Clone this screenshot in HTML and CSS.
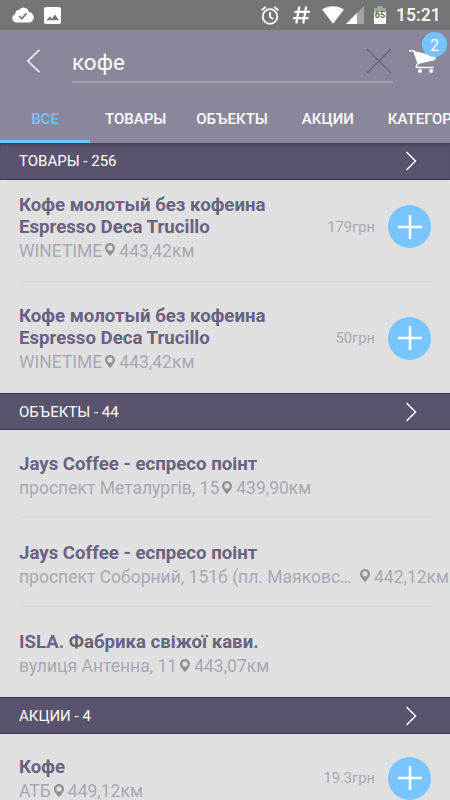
FILE: index.html
```html
<!DOCTYPE html>
<html lang="ru">
<head>
    <meta charset="UTF-8">
    <meta name="viewport" content="width=device-width, initial-scale=1.0">
    <title>Поиск</title>
    <link rel="stylesheet" href="styles.css">
</head>
<body>
    <!-- Shared icons -->
    <svg class="icon-defs" width="0" height="0">
        <symbol id="icon-pin" viewBox="0 0 10 13">
            <path fill-rule="evenodd" d="M5 0C2.2 0 0 2.2 0 4.9 0 8.4 5 13 5 13s5-4.6 5-8.1C10 2.2 7.8 0 5 0zm0 2.3a2.6 2.6 0 1 1 0 5.2 2.6 2.6 0 0 1 0-5.2z"/>
        </symbol>
        <symbol id="icon-plus" viewBox="0 0 24 24">
            <path d="M12 0v24M0 12h24"/>
        </symbol>
        <symbol id="icon-chevron" viewBox="0 0 12 20">
            <path d="M1.500 1l9 9-9 9"/>
        </symbol>
    </svg>

    <div class="status-bar">
        <svg class="status-cloud" width="22" height="16" viewBox="0 0 22 16">
            <path fill="#fff" d="M5 15.500C2.200 15.500 .3 13.600 .3 11.200 .3 8.900 1.700 7.400 3.300 7 3.100 4.400 5 2.800 7.100 3.100 8 1.300 9.800 .4 11.700 .5c2.700 .1 4.600 1.900 5 4.500C19.600 5.200 21.700 7.500 21.700 10.200c0 3-2.100 5.300-4.900 5.300z"/>
            <path fill="none" stroke="#757575" stroke-width="1.700" d="M7 9l2.700 2.700 5-5.400"/>
        </svg>
        <svg class="status-image" width="17" height="17" viewBox="0 0 17 17">
            <rect width="17" height="17" rx="1.800" fill="#fff"/>
            <path fill="#757575" d="M2.600 13.200l3.200-4 2.100 2.500 3.100-4.100 3.900 5.600z"/>
        </svg>
        <div class="status-spacer"></div>
        <svg class="status-alarm" width="18" height="19" viewBox="0 0 18 19">
            <g fill="none" stroke="#fff" stroke-width="1.800">
                <circle cx="9" cy="10.500" r="7.300"/>
                <path d="M9 6v5l3.300 2M.6 4.300L4.800 .9M17.400 4.300L13.200 .9"/>
            </g>
        </svg>
        <svg class="status-hash" width="17" height="18" viewBox="0 0 17 18">
            <path fill="none" stroke="#fff" stroke-width="2.200" d="M6.300 .5L3.300 17.500M13.200 .5L10.200 17.500M1.500 5.800H17M0 12.200H15.500"/>
        </svg>
        <svg class="status-wifi" width="22" height="18" viewBox="0 0 22 18">
            <path fill="#fff" d="M0 3.500C6.200-1 15.800-1 22 3.500L11 17.800z"/>
        </svg>
        <svg class="status-signal" width="18" height="18" viewBox="0 0 18 18">
            <path fill="#a3a3a3" d="M18 0v18H0z"/>
            <path fill="#fff" d="M11 7v11H0z"/>
        </svg>
        <div class="battery">
            <svg width="12" height="18" viewBox="0 0 12 18">
                <path fill="#a3a3a3" d="M3.500 0h5v2H12v5H0V2h3.500z"/>
                <path fill="#fff" d="M0 6h12v11a1 1 0 0 1-1 1H1a1 1 0 0 1-1-1z"/>
            </svg>
            <span class="battery-level">65</span>
        </div>
        <span class="clock">15:21</span>
    </div>

    <header class="app-bar">
        <div class="search-row">
            <svg class="back" width="14" height="24" viewBox="0 0 14 24">
                <path d="M12.500 .7L.9 12l11.600 11.300"/>
            </svg>
            <div class="search-field">
                <span class="search-text">кофе</span>
                <svg class="clear" width="26" height="26" viewBox="0 0 26 26">
                    <path d="M1 1l24 24M25 1L1 25"/>
                </svg>
            </div>
            <div class="cart">
                <svg width="28" height="26" viewBox="0 0 28 26">
                    <path fill="#fff" d="M5 3l21.500 5v4L9 16z"/>
                    <path fill="none" stroke="#fff" stroke-width="1.500" d="M0 2.700h4.700L9.300 15.500 7.500 17.500c-.6 1.300 .1 2 1.200 2H24.500"/>
                    <circle cx="11" cy="23" r="2" fill="#fff"/>
                    <circle cx="22.200" cy="23" r="2" fill="#fff"/>
                </svg>
                <span class="badge">2</span>
            </div>
        </div>
        <nav class="tabs">
            <a class="tab active">ВСЕ</a>
            <a class="tab">ТОВАРЫ</a>
            <a class="tab">ОБЪЕКТЫ</a>
            <a class="tab">АКЦИИ</a>
            <a class="tab">КАТЕГОРИИ</a>
        </nav>
    </header>

    <main class="results">
        <div class="section-header first">
            <span>ТОВАРЫ - 256</span>
            <svg class="chevron" width="12" height="20"><use href="#icon-chevron"/></svg>
        </div>
        <div class="section-list products">
            <div class="item">
                <div class="item-info">
                    <h3 class="item-title">Кофе молотый без кофеина Espresso Deca Trucillo</h3>
                    <p class="item-meta"><span>WINETIME</span><svg class="pin"><use href="#icon-pin"/></svg><span>443,42км</span></p>
                </div>
                <span class="price">179грн</span>
                <button class="add"><svg width="24" height="24"><use href="#icon-plus"/></svg></button>
            </div>
            <div class="item">
                <div class="item-info">
                    <h3 class="item-title">Кофе молотый без кофеина Espresso Deca Trucillo</h3>
                    <p class="item-meta"><span>WINETIME</span><svg class="pin"><use href="#icon-pin"/></svg><span>443,42км</span></p>
                </div>
                <span class="price">50грн</span>
                <button class="add"><svg width="24" height="24"><use href="#icon-plus"/></svg></button>
            </div>
        </div>

        <div class="section-header">
            <span>ОБЪЕКТЫ - 44</span>
            <svg class="chevron" width="12" height="20"><use href="#icon-chevron"/></svg>
        </div>
        <div class="section-list places">
            <div class="item">
                <div class="item-info">
                    <h3 class="item-title">Jays Coffee - еспресо поінт</h3>
                    <p class="item-meta"><span>проспект Металургів, 15</span><svg class="pin"><use href="#icon-pin"/></svg><span>439,90км</span></p>
                </div>
            </div>
            <div class="item">
                <div class="item-info">
                    <h3 class="item-title">Jays Coffee - еспресо поінт</h3>
                    <p class="item-meta long"><span class="address">проспект Соборний, 151б (пл. Маяковс…</span><svg class="pin"><use href="#icon-pin"/></svg><span>442,12км</span></p>
                </div>
            </div>
            <div class="item">
                <div class="item-info">
                    <h3 class="item-title">ISLA. Фабрика свіжої кави.</h3>
                    <p class="item-meta"><span>вулиця Антенна, 11</span><svg class="pin"><use href="#icon-pin"/></svg><span>443,07км</span></p>
                </div>
            </div>
        </div>

        <div class="section-header">
            <span>АКЦИИ - 4</span>
            <svg class="chevron" width="12" height="20"><use href="#icon-chevron"/></svg>
        </div>
        <div class="section-list offers">
            <div class="item">
                <div class="item-info">
                    <h3 class="item-title">Кофе</h3>
                    <p class="item-meta"><span>АТБ</span><svg class="pin"><use href="#icon-pin"/></svg><span>449,12км</span></p>
                </div>
                <span class="price">19.3грн</span>
                <button class="add"><svg width="24" height="24"><use href="#icon-plus"/></svg></button>
            </div>
        </div>
    </main>
</body>
</html>
```
FILE: styles.css
```css
* {
    box-sizing: border-box;
}

body {
    margin: 0;
    height: 800px;
    overflow: hidden;
    display: flex;
    flex-direction: column;
    background: #e0e0e0;
    font-family: Roboto, "Noto Sans", sans-serif;
    color: #696283;
}

svg {
    display: block;
    flex: none;
}

.icon-defs {
    position: absolute;
}

/* Status bar */
.status-bar {
    flex: none;
    display: flex;
    align-items: center;
    height: 30px;
    padding: 0 10px 0 12px;
    background: #757575;
    color: #ffffff;
}

.status-image {
    margin-left: 10px;
}

.status-spacer {
    flex: 1;
}

.status-hash {
    margin-left: 14px;
}

.status-wifi {
    margin-left: 12px;
}

.status-signal {
    margin-left: 2px;
}

.battery {
    position: relative;
    margin-left: 10px;
}

.battery-level {
    position: absolute;
    top: 5px;
    left: 0;
    width: 12px;
    font-size: 9px;
    line-height: 9px;
    font-weight: 700;
    text-align: center;
    color: #616161;
}

.clock {
    width: 44px;
    margin-left: 10px;
    font-size: 17.6px;
    font-weight: 500;
    line-height: 31px;
    white-space: nowrap;
}

/* Search and tabs */
.app-bar {
    flex: none;
    height: 113px;
    overflow: hidden;
    background: #8b879b;
    color: #ffffff;
}

.search-row {
    display: flex;
    height: 64px;
    padding-left: 27px;
}

.back {
    margin-top: 19px;
    fill: none;
    stroke: #ffffff;
    stroke-width: 1.5;
}

.search-field {
    display: flex;
    justify-content: space-between;
    width: 321px;
    height: 53px;
    margin-left: 31px;
    border-bottom: 2px solid #a5a1b1;
}

.search-text {
    padding-top: 19px;
    font-size: 22.4px;
    line-height: 26px;
}

.clear {
    margin: 18px 1px 0 0;
    fill: none;
    stroke: #67627a;
    stroke-width: 1.3;
}

.cart {
    position: relative;
    margin: 18px 0 0 16px;
}

.badge {
    position: absolute;
    top: -16px;
    left: 13px;
    width: 25px;
    height: 25px;
    border-radius: 50%;
    background: #76c4ff;
    font-size: 16px;
    line-height: 27px;
    text-align: center;
}

.tabs {
    display: flex;
    height: 49px;
}

.tab {
    flex: none;
    min-width: 90px;
    padding: 0 15px;
    font-size: 15px;
    font-weight: 500;
    line-height: 50px;
    text-align: center;
}

.tab.active {
    height: 49px;
    border-bottom: 3px solid #76c4ff;
    color: #76c4ff;
}

/* Results */
.section-header {
    display: flex;
    justify-content: space-between;
    align-items: center;
    height: 37px;
    padding: 0 33px 0 19px;
    border-top: 1px solid #3b3457;
    border-bottom: 1px solid #3b3457;
    background: #59536e;
    color: #ffffff;
    font-size: 15px;
}

.section-header.first {
    border-top: 0;
    box-shadow: inset 0 3px 3px -1px #454054;
}

.chevron {
    fill: none;
    stroke: #ffffff;
    stroke-width: 1.5;
}

.item {
    display: flex;
    align-items: center;
    height: 89px;
    margin: 0 19px;
    padding-top: 3px;
    border-bottom: 1px solid #d9d9d9;
}

.section-list .item:last-child {
    border-bottom-color: transparent;
}

.products .item {
    height: 111px;
    padding-top: 2px;
}

.products .item:first-child {
    height: 102px;
    padding: 0 0 8px;
}

.places .item:first-child {
    height: 88px;
}

.places .item:last-child {
    height: 90px;
}

.offers .item {
    height: 86px;
}

.item-info {
    flex: 1;
    min-width: 0;
    padding-top: 2px;
}

.item-title {
    max-width: 280px;
    margin: 0;
    font-size: 18.65px;
    font-weight: 700;
    line-height: 22px;
}

.item-meta {
    display: flex;
    align-items: center;
    margin: 2px 0 0;
    font-size: 17.5px;
    line-height: 22px;
    white-space: nowrap;
    color: #aaa7b5;
}

/* distance runs up to the edge of the screen */
.item-meta.long {
    margin-right: -19px;
}

.address {
    width: 338px;
}

.pin {
    width: 10px;
    height: 13px;
    margin: 0 4px 2px 3px;
    fill: #929292;
}

.price {
    margin-right: 13px;
    font-size: 14.7px;
    color: #aaa7b5;
}

.add {
    display: flex;
    justify-content: center;
    align-items: center;
    width: 43px;
    height: 43px;
    padding: 0;
    border: 0;
    border-radius: 50%;
    background: #7ac5ff;
}

.add svg {
    stroke: #ffffff;
    stroke-width: 2.5;
}
```
